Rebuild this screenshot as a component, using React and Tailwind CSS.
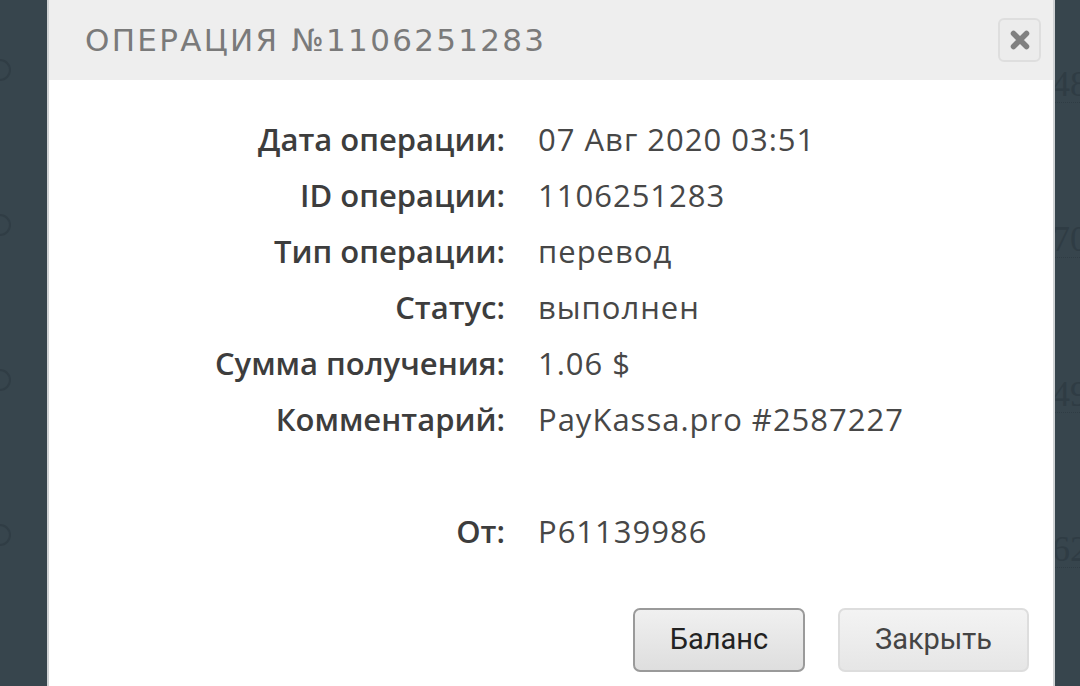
import React from 'react'

const rows = [
    { label: 'Дата операции:', value: '07 Авг 2020 03:51' },
    { label: 'ID операции:', value: '1106251283' },
    { label: 'Тип операции:', value: 'перевод' },
    { label: 'Статус:', value: 'выполнен' },
    { label: 'Сумма получения:', value: '1.06 $' },
    { label: 'Комментарий:', value: 'PayKassa.pro #2587227' },
    { label: '', value: '' },
    { label: 'От:', value: 'P61139986' },
]

const bgRows = ['48', '70', '49', '62']

export default function App() {
    return (
        <div className="relative w-[1080px] h-[686px] overflow-hidden bg-[#37454d]">
            {/* page behind the overlay */}
            <div className="flex flex-col pt-[52px] gap-[119px]">
                {bgRows.map((n, i) => (
                    <div key={i} className="flex items-center justify-between h-[36px]">
                        <div className="w-[22px] h-[22px] -ml-[11px] rounded-full border-2 border-[#303d45]" />
                        <div className="flex flex-col items-start mt-[28px] -mr-[8px]">
                            <span className="text-[36px] leading-[36px] text-[#2f3c44] font-['Liberation_Serif',serif]">{n}</span>
                            <span className="w-[30px] border-b border-dotted border-[#2f3c44]" />
                        </div>
                    </div>
                ))}
            </div>

            {/* modal */}
            <div className="absolute left-[47px] top-0 w-[1008px] h-[720px] bg-white border-x-2 border-[#cfd2d4]">
                <div className="flex items-center justify-between h-[80px] bg-[#eeeeee] pl-[36px] pr-[12px]">
                    <h1 className="text-[31px] tracking-[2.3px] text-[#7a7a7a] font-['DejaVu_Sans',sans-serif] font-normal">
                        ОПЕРАЦИЯ №1106251283
                    </h1>
                    <button className="flex items-center justify-center w-[43px] h-[44px] rounded-[6px] border-2 border-[#dedede] bg-[#ececec]">
                        <svg width="22" height="22" viewBox="0 0 22 22">
                            <path d="M4.5 4.5 L17.5 17.5 M17.5 4.5 L4.5 17.5" stroke="#808080" strokeWidth="5.5" strokeLinecap="round" />
                        </svg>
                    </button>
                </div>

                <div className="grid grid-cols-[456px_1fr] gap-x-[33px] pt-[31px] font-['Open_Sans',sans-serif] text-[31px] text-[#3d3d3d]">
                    {rows.map((r, i) => (
                        <React.Fragment key={i}>
                            <div className="h-[56px] leading-[56px] text-right font-semibold">{r.label}</div>
                            <div className="h-[56px] leading-[56px] text-[#474747] tracking-[1px]">{r.value}</div>
                        </React.Fragment>
                    ))}
                </div>

                <div className="flex justify-end gap-[33px] pr-[24px] mt-[49px] font-['Roboto',sans-serif] text-[29px]">
                    <button className="w-[172px] h-[64px] rounded-[7px] border-2 border-[#9a9a9a] bg-gradient-to-b from-[#f0f0f0] to-[#dedede] text-[#222]">
                        Баланс
                    </button>
                    <button className="w-[191px] h-[64px] rounded-[7px] border-2 border-[#dddddd] bg-gradient-to-b from-[#f3f3f3] to-[#e6e6e6] text-[#444]">
                        Закрыть
                    </button>
                </div>
            </div>
        </div>
    )
}
